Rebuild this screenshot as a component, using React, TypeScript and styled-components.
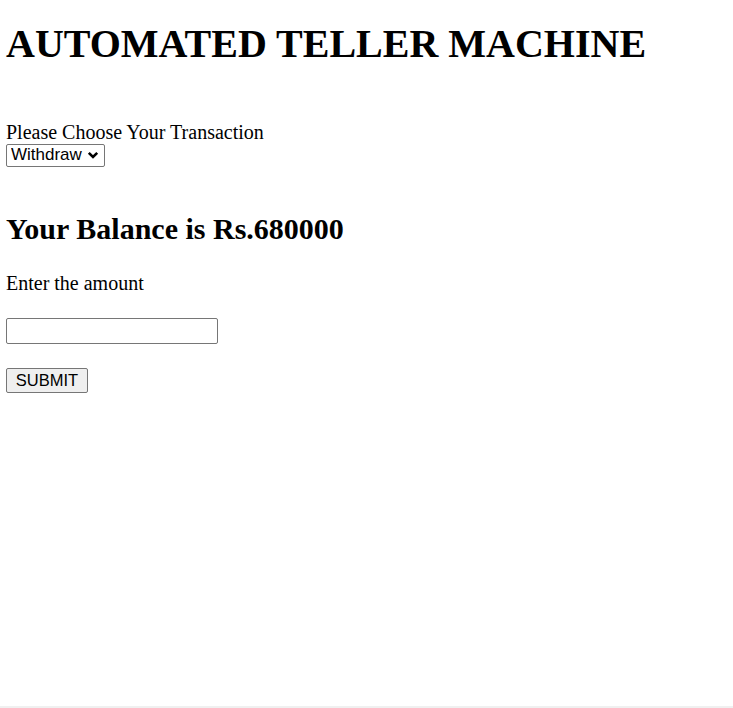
import React, { useState } from "react";
import styled, { createGlobalStyle } from "styled-components";

const GlobalStyle = createGlobalStyle`
  html, body {
    margin: 0;
    padding: 0;
    background: #ffffff;
  }
  body {
    font-family: "Liberation Serif", "Times New Roman", serif;
    color: #000000;
  }
`;

const Page = styled.div`
  min-height: 100vh;
  display: flex;
  flex-direction: column;
  box-sizing: border-box;
`;

const Main = styled.main`
  display: flex;
  flex-direction: column;
  align-items: flex-start;
  padding: 20.5px 6px 0 6px;
`;

const Title = styled.h1`
  margin: 0;
  font-size: 40px;
  line-height: 46px;
  font-weight: bold;
`;

const Label = styled.label<{ $top: number }>`
  display: block;
  margin-top: ${(p) => p.$top}px;
  font-size: 20px;
  line-height: 23px;
`;

const Text = styled.p<{ $top: number }>`
  margin: ${(p) => p.$top}px 0 0 0;
  font-size: 20px;
  line-height: 23px;
`;

const SelectWrap = styled.div`
  position: relative;
  display: inline-flex;
`;

const Select = styled.select`
  appearance: none;
  -webkit-appearance: none;
  box-sizing: border-box;
  width: 99px;
  height: 23px;
  margin: 0;
  padding: 0 0 1px 4px;
  font-family: "Liberation Sans", Arial, sans-serif;
  font-size: 17px;
  color: #000;
  background: #ffffff;
  border: 1px solid #767676;
  border-radius: 2px;
  outline: none;
`;

const Chevron = styled.svg`
  position: absolute;
  right: 6px;
  top: 7px;
  width: 12px;
  height: 8px;
  pointer-events: none;
`;

const Heading = styled.h2`
  margin: 45.6px 0 0 0;
  font-size: 30px;
  line-height: 34px;
  font-weight: bold;
`;

const Input = styled.input`
  box-sizing: border-box;
  margin: 23.5px 0 0 0;
  width: 212px;
  height: 26px;
  padding: 1px 3px;
  font-family: "Liberation Sans", Arial, sans-serif;
  font-size: 17px;
  border: 1px solid #767676;
  border-radius: 2px;
  background: #ffffff;
  outline: none;
`;

const Button = styled.button`
  box-sizing: border-box;
  margin: 24px 0 0 0;
  width: 82px;
  height: 25px;
  padding: 0;
  font-family: "Liberation Sans", Arial, sans-serif;
  font-size: 16.5px;
  color: #000;
  background: #efefef;
  border: 1px solid #767676;
  border-radius: 2px;
  cursor: pointer;
`;

const BottomLine = styled.div`
  margin-top: auto;
  height: 2px;
  background: #f0f0f0;
`;

export default function App() {
  const [tx, setTx] = useState("withdraw");
  const [amount, setAmount] = useState("");
  return (
    <Page>
      <GlobalStyle />
      <Main>
        <Title>AUTOMATED TELLER MACHINE</Title>
        <Label $top={54.25} htmlFor="tx">
          Please Choose Your Transaction
        </Label>
        <SelectWrap>
          <Select id="tx" value={tx} onChange={(e) => setTx(e.target.value)}>
            <option value="withdraw">Withdraw</option>
            <option value="deposit">Deposit</option>
          </Select>
          <Chevron viewBox="0 0 12 8">
            <path
              d="M1.8 1.8 L6 6 L10.2 1.8"
              fill="none"
              stroke="#000"
              strokeWidth="2.6"
            />
          </Chevron>
        </SelectWrap>
        <Heading>Your Balance is Rs.680000</Heading>
        <Text $top={25.5}>Enter the amount</Text>
        <Input
          type="text"
          value={amount}
          onChange={(e) => setAmount(e.target.value)}
        />
        <Button type="button">SUBMIT</Button>
      </Main>
      <BottomLine />
    </Page>
  );
}
